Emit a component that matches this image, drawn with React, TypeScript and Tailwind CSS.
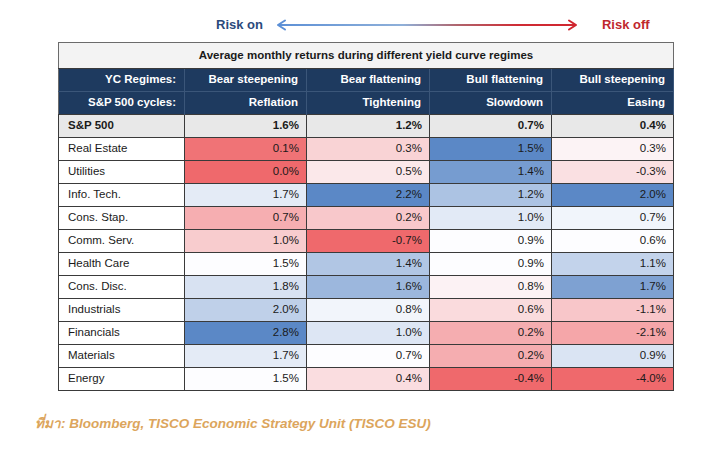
const regimes = ['Bear steepening', 'Bear flattening', 'Bull flattening', 'Bull steepening'];
const cycles = ['Reflation', 'Tightening', 'Slowdown', 'Easing'];
const spx = ['1.6%', '1.2%', '0.7%', '0.4%'];

const sectors: { name: string; values: number[] }[] = [
  { name: 'Real Estate', values: [0.1, 0.3, 1.5, 0.3] },
  { name: 'Utilities', values: [0.0, 0.5, 1.4, -0.3] },
  { name: 'Info. Tech.', values: [1.7, 2.2, 1.2, 2.0] },
  { name: 'Cons. Stap.', values: [0.7, 0.2, 1.0, 0.7] },
  { name: 'Comm. Serv.', values: [1.0, -0.7, 0.9, 0.6] },
  { name: 'Health Care', values: [1.5, 1.4, 0.9, 1.1] },
  { name: 'Cons. Disc.', values: [1.8, 1.6, 0.8, 1.7] },
  { name: 'Industrials', values: [2.0, 0.8, 0.6, -1.1] },
  { name: 'Financials', values: [2.8, 1.0, 0.2, -2.1] },
  { name: 'Materials', values: [1.7, 0.7, 0.2, 0.9] },
  { name: 'Energy', values: [1.5, 0.4, -0.4, -4.0] },
];

// excel style 3-colour scale, per column, midpoint = median
const RED = [239, 105, 108];
const WHITE = [253, 253, 255];
const BLUE = [91, 136, 198];

function mix(a: number[], b: number[], t: number) {
  const c = a.map((v, i) => Math.round(v + (b[i] - v) * t));
  return `rgb(${c[0]}, ${c[1]}, ${c[2]})`;
}

const scales = [0, 1, 2, 3].map((c) => {
  const col = sectors.map((s) => s.values[c]).sort((a, b) => a - b);
  return { min: col[0], med: col[Math.floor(col.length / 2)], max: col[col.length - 1] };
});

function heat(v: number, c: number) {
  const { min, med, max } = scales[c];
  if (v >= med) return mix(WHITE, BLUE, max === med ? 0 : (v - med) / (max - med));
  return mix(WHITE, RED, (med - v) / (med - min));
}

export default function App() {
  return (
    <div className="w-[718px] h-[450px] bg-white overflow-hidden font-['Liberation_Sans',Arial,sans-serif]">
      {/* Risk on / off */}
      <div className="flex items-center h-[20px] mt-[15px] mb-[7px] pl-[216px]">
        <span className="text-[13px] font-bold text-[#2b4a7c]">Risk on</span>
        <svg width="304" height="12" viewBox="0 0 304 12" className="ml-[12px]">
          <defs>
            <linearGradient id="g" gradientUnits="userSpaceOnUse" x1="0" y1="6" x2="304" y2="6">
              <stop offset="0" stopColor="#5b8fd6" />
              <stop offset="0.42" stopColor="#8fb0d9" />
              <stop offset="0.6" stopColor="#b0646c" />
              <stop offset="0.8" stopColor="#cf2b34" />
              <stop offset="1" stopColor="#d0262f" />
            </linearGradient>
          </defs>
          <line x1="3" y1="6" x2="301" y2="6" stroke="url(#g)" strokeWidth="2" />
          <polyline points="10,1.5 3,6 10,10.5" fill="none" stroke="#5b8fd6" strokeWidth="2" strokeLinejoin="round" strokeLinecap="round" />
          <polyline points="294,1.5 301,6 294,10.5" fill="none" stroke="#d0262f" strokeWidth="2" strokeLinejoin="round" strokeLinecap="round" />
        </svg>
        <span className="ml-[23px] text-[13px] font-bold text-[#c0272d]">Risk off</span>
      </div>

      {/* Table */}
      <table className="ml-[58px] border-collapse table-fixed text-[11.5px] text-[#1a1a1a] border border-[#6b6b6b]">
        <colgroup>
          <col className="w-[126px]" />
          <col className="w-[122px]" />
          <col className="w-[123px]" />
          <col className="w-[122px]" />
          <col className="w-[122px]" />
        </colgroup>
        <tbody>
          <tr className="h-[26px] bg-[#f3f3f3]">
            <td colSpan={5} className="text-center font-bold border-b border-[#3a3a3a]">
              Average monthly returns during different yield curve regimes
            </td>
          </tr>
          <tr className="h-[23px] bg-[#1e3a5f] text-white font-bold">
            <td className="text-right pr-[8px] border-r border-[#3b5679]">YC Regimes:</td>
            {regimes.map((r) => (
              <td key={r} className="text-right pr-[8px] border-r border-[#3b5679]">{r}</td>
            ))}
          </tr>
          <tr className="h-[23px] bg-[#1e3a5f] text-white font-bold border-t border-[#3b5679]">
            <td className="text-right pr-[8px] border-r border-[#3b5679]">S&amp;P 500 cycles:</td>
            {cycles.map((c) => (
              <td key={c} className="text-right pr-[8px] border-r border-[#3b5679]">{c}</td>
            ))}
          </tr>
          <tr className="h-[23px] bg-[#e8e8e8] font-bold">
            <td className="pl-[9px] border border-[#3a3a3a]">S&amp;P 500</td>
            {spx.map((v, i) => (
              <td key={i} className="text-right pr-[7px] border border-[#3a3a3a]">{v}</td>
            ))}
          </tr>
          {sectors.map((s) => (
            <tr key={s.name} className="h-[23px]">
              <td className="pl-[9px] bg-white border border-[#3a3a3a]">{s.name}</td>
              {s.values.map((v, i) => (
                <td
                  key={i}
                  className="text-right pr-[7px] border border-[#3a3a3a]"
                  style={{ backgroundColor: heat(v, i) }}
                >
                  {v.toFixed(1)}%
                </td>
              ))}
            </tr>
          ))}
        </tbody>
      </table>

      {/* Source */}
      <div className="mt-[23px] ml-[35px] text-[13.5px] italic font-bold text-[#dca55c] font-['Liberation_Sans','Noto_Sans',sans-serif]">
        ที่มา: Bloomberg, TISCO Economic Strategy Unit (TISCO ESU)
      </div>
    </div>
  );
}
